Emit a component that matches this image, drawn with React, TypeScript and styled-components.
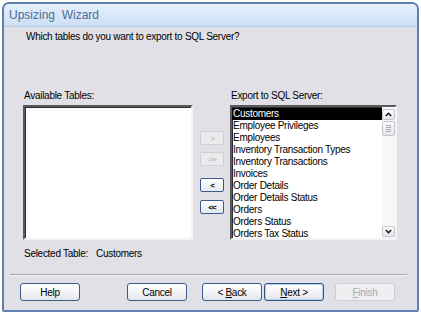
import React from 'react'
import styled, { createGlobalStyle } from 'styled-components'

const GlobalStyle = createGlobalStyle`
    html, body {
        margin: 0;
        padding: 0;
        background: #ffffff;
    }
    body {
        font-family: "Liberation Sans", Arial, sans-serif;
        font-size: 10px;
        color: #000000;
    }
`

const Window = styled.div`
    margin: 2px 0 0 2px;
    width: 413px;
    border: 2px solid #5d80ae;
    border-radius: 7px 7px 2px 2px;
    background: #e1e0e6;
    overflow: hidden;
    display: flex;
    flex-direction: column;
`

const TitleBar = styled.div`
    height: 22px;
    display: flex;
    align-items: center;
    padding-left: 5px;
    background: linear-gradient(#e6f0fb, #cddff4);
    border-bottom: 1px solid #b7cbe4;
    color: #4a6c9c;
    font-size: 12px;
    white-space: pre;
`

const Body = styled.div`
    display: flex;
    flex-direction: column;
    padding: 4px 0 9px 0;
    letter-spacing: -0.28px;
`

const Question = styled.div`
    height: 12px;
    line-height: 12px;
    margin-left: 22px;
`

const ListsRow = styled.div`
    display: flex;
    margin-top: 47px;
    margin-left: 19px;
`

const ListColumn = styled.div<{ $width: number }>`
    display: flex;
    flex-direction: column;
    width: ${p => p.$width}px;
`

const Label = styled.div`
    height: 12px;
    line-height: 12px;
    margin: 0 0 3px 1px;
`

const ListBox = styled.div`
    height: 135px;
    box-sizing: border-box;
    background: #ffffff;
    border-style: solid;
    border-width: 2px;
    border-color: #5a5a5a #f4f4f4 #f4f4f4 #5a5a5a;
    box-shadow: inset 1px 1px 0 #2f2f2f;
    display: flex;
`

const Items = styled.div`
    flex: 1;
    display: flex;
    flex-direction: column;
    padding-top: 1px;
`

const Item = styled.div<{ $selected?: boolean }>`
    height: 12px;
    line-height: 12px;
    padding-left: 1px;
    white-space: nowrap;
    background: ${p => (p.$selected ? '#000000' : 'transparent')};
    color: ${p => (p.$selected ? '#ffffff' : '#000000')};
`

const ScrollBar = styled.div`
    width: 13px;
    display: flex;
    flex-direction: column;
    justify-content: space-between;
    padding: 2px 0 1px 0;
    background: #f7f7f9;
`

const ScrollButton = styled.div`
    height: 11px;
    box-sizing: border-box;
    border: 1px solid #c4c6cc;
    border-radius: 2px;
    background: linear-gradient(#fbfbfc, #e6e7ea);
    display: flex;
    align-items: center;
    justify-content: center;
`

const Thumb = styled(ScrollButton)`
    height: 15px;
    margin-top: 1px;
    flex-direction: column;
    gap: 1px;
`

const Grip = styled.div`
    width: 5px;
    height: 1px;
    background: #a8abb2;
`

const Track = styled.div`
    flex: 1;
    display: flex;
    flex-direction: column;
`

const MoveColumn = styled.div`
    width: 24px;
    margin: 0 6px 0 7px;
    padding-top: 41px;
    display: flex;
    flex-direction: column;
`

const MoveButton = styled.div<{ $disabled?: boolean; $gap: number }>`
    height: 14px;
    margin-top: ${p => p.$gap}px;
    box-sizing: border-box;
    border: 1px solid ${p => (p.$disabled ? '#cfcfd3' : '#3b5b8a')};
    border-radius: 2px;
    background: ${p => (p.$disabled ? '#ebebee' : 'linear-gradient(#ffffff, #e4e8f0)')};
    color: ${p => (p.$disabled ? '#a8a8ac' : '#000000')};
    font-size: 8px;
    font-weight: ${p => (p.$disabled ? 'normal' : 'bold')};
    display: flex;
    align-items: center;
    justify-content: center;
    letter-spacing: -1px;
`

const SelectedRow = styled.div`
    display: flex;
    height: 12px;
    line-height: 12px;
    margin: 8px 0 0 20px;
    gap: 8px;
`

const Separator = styled.div`
    margin: 14px 10px 0 6px;
    height: 1px;
    background: #a6a6aa;
    border-bottom: 1px solid #f6f6f8;
`

const ButtonRow = styled.div`
    display: flex;
    margin: 7px 0 0 16px;
`

const DialogButton = styled.div<{ $disabled?: boolean; $gap: number; $default?: boolean }>`
    width: 60px;
    height: 18px;
    margin-left: ${p => p.$gap}px;
    box-sizing: border-box;
    border: 1px solid ${p => (p.$disabled ? '#cfcfd3' : p.$default ? '#2f5487' : '#3d5d8b')};
    border-radius: 3px;
    background: ${p => (p.$disabled ? '#efeff1' : 'linear-gradient(#ffffff 0%, #f3f4f7 50%, #e2e5ec 100%)')};
    box-shadow: ${p => (p.$default ? 'inset 0 0 0 1px #b9d1ee' : 'none')};
    color: ${p => (p.$disabled ? '#a9a9ad' : '#000000')};
    display: flex;
    align-items: center;
    justify-content: center;
    white-space: pre;
`

const Key = styled.span`
    text-decoration: underline;
`

function Chevron({ up }: { up?: boolean }): React.ReactElement {
    return (
        <svg width="7" height="5" viewBox="0 0 7 5">
            <polyline
                points={up ? '0.8,4 3.5,1.3 6.2,4' : '0.8,1 3.5,3.7 6.2,1'}
                fill="none"
                stroke="#1a1a1a"
                strokeWidth="1.6"
            />
        </svg>
    )
}

const tables = [
    'Customers',
    'Employee Privileges',
    'Employees',
    'Inventory Transaction Types',
    'Inventory Transactions',
    'Invoices',
    'Order Details',
    'Order Details Status',
    'Orders',
    'Orders Status',
    'Orders Tax Status',
]

export default function App(): React.ReactElement {
    return <>
        <GlobalStyle />
        <Window>
            <TitleBar>Upsizing  Wizard</TitleBar>
            <Body>
                <Question>Which tables do you want to export to SQL Server?</Question>
                <ListsRow>
                    <ListColumn $width={170}>
                        <Label>Available Tables:</Label>
                        <ListBox />
                    </ListColumn>
                    <MoveColumn>
                        <MoveButton $disabled $gap={0}>&gt;</MoveButton>
                        <MoveButton $disabled $gap={7}>&gt;&gt;</MoveButton>
                        <MoveButton $gap={12}>&lt;</MoveButton>
                        <MoveButton $gap={8}>&lt;&lt;</MoveButton>
                    </MoveColumn>
                    <ListColumn $width={167}>
                        <Label>Export to SQL Server:</Label>
                        <ListBox>
                            <Items>
                                {tables.map((name, i) => (
                                    <Item key={name} $selected={i === 0}>{name}</Item>
                                ))}
                            </Items>
                            <ScrollBar>
                                <Track>
                                    <ScrollButton><Chevron up /></ScrollButton>
                                    <Thumb>
                                        <Grip />
                                        <Grip />
                                        <Grip />
                                        <Grip />
                                    </Thumb>
                                </Track>
                                <ScrollButton><Chevron /></ScrollButton>
                            </ScrollBar>
                        </ListBox>
                    </ListColumn>
                </ListsRow>
                <SelectedRow>
                    <span>Selected Table:</span>
                    <span>Customers</span>
                </SelectedRow>
                <Separator />
                <ButtonRow>
                    <DialogButton $gap={0}>Help</DialogButton>
                    <DialogButton $gap={47}>Cancel</DialogButton>
                    <DialogButton $gap={15}>&lt; <Key>B</Key>ack</DialogButton>
                    <DialogButton $gap={2} $default><Key>N</Key>ext &gt;</DialogButton>
                    <DialogButton $gap={11} $disabled><Key>F</Key>inish</DialogButton>
                </ButtonRow>
            </Body>
        </Window>
    </>
}
